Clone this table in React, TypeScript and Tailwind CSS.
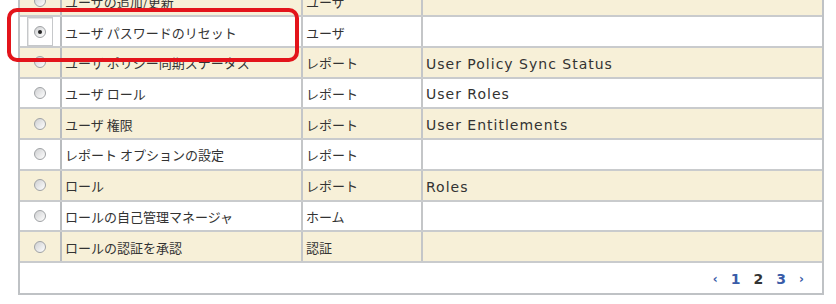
import React from "react";

type Row = {
  name: string;
  type: string;
  desc?: string;
  selected?: boolean;
};

const rows: Row[] = [
  { name: "ユーザの追加/更新", type: "ユーザ" },
  { name: "ユーザ パスワードのリセット", type: "ユーザ", selected: true },
  { name: "ユーザ ポリシー同期ステータス", type: "レポート", desc: "User Policy Sync Status" },
  { name: "ユーザ ロール", type: "レポート", desc: "User Roles" },
  { name: "ユーザ 権限", type: "レポート", desc: "User Entitlements" },
  { name: "レポート オプションの設定", type: "レポート" },
  { name: "ロール", type: "レポート", desc: "Roles" },
  { name: "ロールの自己管理マネージャ", type: "ホーム" },
  { name: "ロールの認証を承認", type: "認証" },
];

const jp = { fontFamily: '"Noto Sans CJK JP", "DejaVu Sans", sans-serif' };
const en = { fontFamily: '"DejaVu Sans", Verdana, sans-serif' };

function Radio({ checked }: { checked?: boolean }) {
  return (
    <span className="flex h-[12px] w-[12px] items-center justify-center rounded-full border border-[#9fa2a5] bg-gradient-to-br from-[#cfd0d2] to-white">
      {checked && <span className="h-[4px] w-[4px] rounded-full bg-[#222]" />}
    </span>
  );
}

export default function App() {
  return (
    <div className="relative h-[304px] w-[836px] overflow-hidden bg-white text-[#333]">
      <div className="ml-[18px] mt-[-13.75px] w-[806px] border-x-2 border-b-2 border-[#bfc2c5]">
        {rows.map((r, i) => (
          <div
            key={i}
            className={`grid h-[30.75px] grid-cols-[40px_241px_120px_1fr] border-b-2 border-[#c9cbcd] ${
              i % 2 === 0 ? "bg-[#f7f0d8]" : "bg-white"
            }`}
          >
            <div className="flex items-center justify-center">
              {r.selected ? (
                <div className="flex h-[29px] w-[26px] items-center justify-center border border-[#c6c8ca] bg-white shadow-[inset_1px_1px_0_#e6e6e6]">
                  <Radio checked />
                </div>
              ) : (
                <Radio />
              )}
            </div>
            <div
              className="flex items-center border-l-2 border-[#b9bcbf] pl-[3px] pt-[1px] text-[13px] leading-none"
              style={jp}
            >
              {r.name}
            </div>
            <div
              className="flex items-center border-l-2 border-[#c4c6c8] pl-[3px] pt-[1px] text-[13px] leading-none"
              style={jp}
            >
              {r.type}
            </div>
            <div
              className="flex items-center border-l-2 border-[#c4c6c8] pl-[3px] pt-[3px] text-[14px] leading-none tracking-[1px]"
              style={en}
            >
              {r.desc}
            </div>
          </div>
        ))}
        <div
          className="flex h-[30px] items-center justify-end gap-[13px] pr-[18px] pt-[2px] text-[14px] font-bold text-[#3a5ca8]"
          style={en}
        >
          <span className="text-[12px]">‹</span>
          <span>1</span>
          <span className="text-[#333]">2</span>
          <span>3</span>
          <span className="text-[12px]">›</span>
        </div>
      </div>
      <div className="absolute left-[7px] top-[8px] h-[54px] w-[292px] rounded-[10px] border-4 border-[#e3141b]" />
    </div>
  );
}
